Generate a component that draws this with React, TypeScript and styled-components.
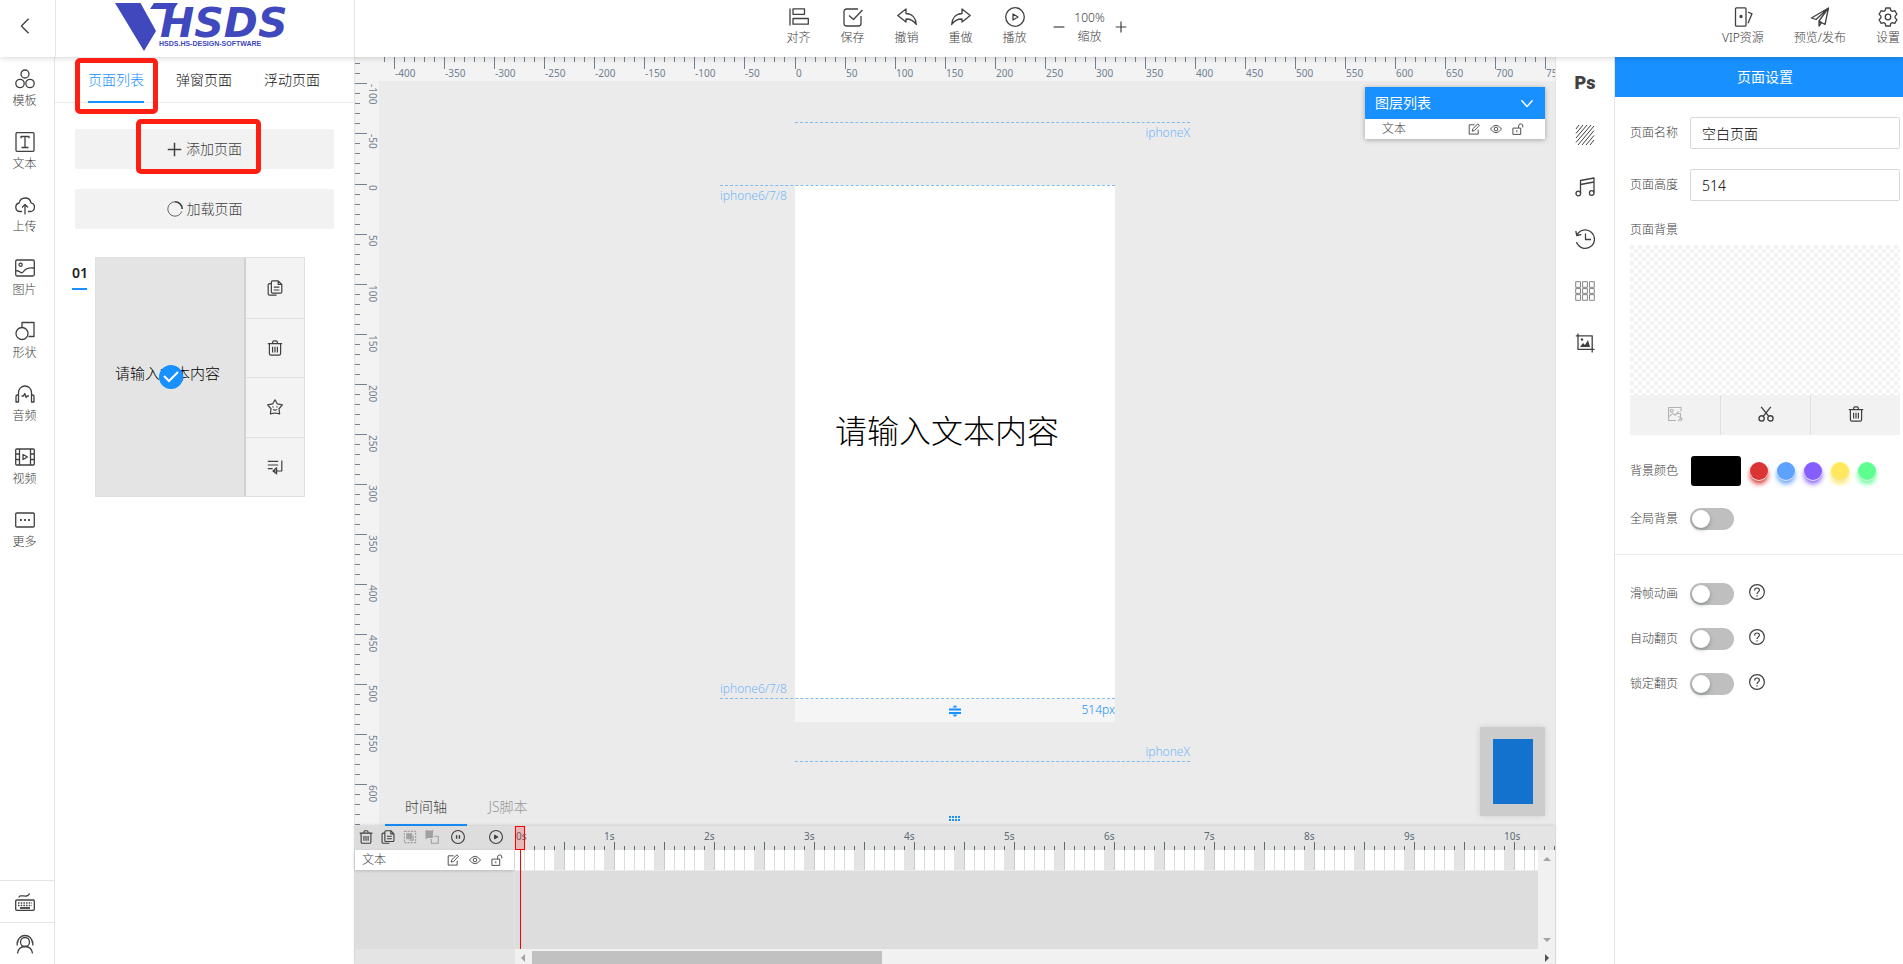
import React, { useLayoutEffect, useRef, useState } from "react";
import styled, { createGlobalStyle } from "styled-components";

const BLUE = "#1890ff";
const INK = "#404040";

const GlobalStyle = createGlobalStyle`
  *, *::before, *::after { box-sizing: border-box; }
  html, body, #root { height: 100%; }
  body {
    margin: 0;
    overflow: hidden;
    font-family: "Noto Sans", "Noto Sans CJK SC", sans-serif;
    font-size: 12px;
    font-weight: 300;
    line-height: 16px;
    color: ${INK};
    background: #fff;
  }
  button, input {
    font: inherit;
    color: inherit;
    margin: 0;
    padding: 0;
    border: 0;
    background: none;
  }
  button { cursor: pointer; }
  svg { display: block; }
  a { color: inherit; text-decoration: none; }
`;

/* ---------- icons ---------- */

type IconProps = { size?: number; weight?: number; children: React.ReactNode };

const Icon = ({ size = 20, weight = 1.3, children }: IconProps) => (
  <svg
    width={size}
    height={size}
    viewBox="0 0 20 20"
    fill="none"
    stroke="currentColor"
    strokeWidth={weight}
    strokeLinejoin="round"
    aria-hidden="true"
  >
    {children}
  </svg>
);

const icons = {
  template: (
    <>
      <circle cx="10" cy="5" r="4" />
      <circle cx="5" cy="14.5" r="4.2" />
      <circle cx="15" cy="14.5" r="4.2" />
    </>
  ),
  text: (
    <>
      <rect x="1" y="0.7" width="18" height="18.6" rx="1" />
      <path d="M6 6.2V4.5h8v1.7M10 4.5v11M6.5 15.5h7" />
    </>
  ),
  upload: (
    <path d="M7 16.500H5a4.300 4.300 0 0 1-.8-8.500A6 6 0 0 1 16 7.800a4.400 4.400 0 0 1-.8 8.700H13M10 19.500V9.500M7 12.500l3-3 3 3" />
  ),
  picture: (
    <>
      <rect x="0.7" y="2" width="18.6" height="16" rx="1.5" />
      <circle cx="5.6" cy="6.7" r="1.6" />
      <path d="M1 13c3-1.500 4 3 6.500 1.500S9.500 9 19 10" />
    </>
  ),
  shape: (
    <>
      <path d="M7 6V1.500h12v14h-5.500" />
      <circle cx="7" cy="12.500" r="6" />
    </>
  ),
  audio: (
    <>
      <path d="M3.500 11V8.500a6.500 6.500 0 0 1 13 0V11M3.500 11h-1a1.500 1.500 0 0 0-1.500 1.500V18h2.500zM16.500 11h1a1.500 1.500 0 0 1 1.500 1.500V18h-2.500z" />
      <path d="M6.500 12h2l1.200-2.500 1.500 4 .9-1.500h1.800" />
    </>
  ),
  video: (
    <>
      <rect x="0.7" y="2" width="18.6" height="16" rx="1" />
      <path d="M4.500 2v16M15.500 2v16M1 7h3.500M1 12.500h3.500M15.500 7H19M15.500 12.500H19M8 7.500v5l4.500-2.500z" />
    </>
  ),
  more: (
    <>
      <rect x="0.7" y="3" width="18.6" height="14" rx="1" />
      <path d="M5 10h1.800M9.100 10h1.800M13.200 10H15" strokeWidth="1.800" />
    </>
  ),
  keyboard: (
    <>
      <rect x="0.7" y="8" width="18.6" height="10.300" rx="1" />
      <path d="M3 11h14M3 13.500h14" strokeDasharray="1.500 1.200" />
      <path d="M5 16h10" strokeWidth="1.800" />
      <path d="M4 5.500c0-3 5-1 7.500-1.500S14 2.500 14.500 1.500" />
    </>
  ),
  support: (
    <>
      <circle cx="10" cy="8" r="4.500" />
      <path d="M2.500 9a7.500 7.500 0 0 1 15 0M2.200 7.500v4M17.800 7.500v4M2.500 19.500c.5-4 3-7 7.500-7s7 3 7.500 7" />
    </>
  ),
  align: (
    <>
      <path d="M1 1.500v17" />
      <path d="M4 1.800h11.500v5.500H4zM4 11.500h15.300v5.700H4z" />
    </>
  ),
  save: (
    <>
      <path d="M15 2H3.500A2.500 2.500 0 0 0 1 4.500v12A2.500 2.500 0 0 0 3.500 19h12a2.500 2.500 0 0 0 2.500-2.500V9" />
      <path d="M6 8.500l4.500 4L19.500 3" />
    </>
  ),
  undo: <path d="M9 2v4.500c6 .3 10 4.500 10.300 11-3-4.500-5.800-5.500-10.300-5.500v3L.8 8.500z" />,
  redo: <path d="M11 2v4.500C5 6.800 1 11 .7 17.500 3.700 13 6.500 12 11 12v3l8.200-6.500z" />,
  play: (
    <>
      <circle cx="10" cy="10" r="9.300" />
      <path d="M8 7v6l5-3z" />
    </>
  ),
  vip: (
    <>
      <rect x="2.500" y="0.800" width="10.500" height="18.400" rx="1" />
      <path d="M15 5l4 1.800-4 9.500" />
      <circle cx="8" cy="9.500" r="1" fill="currentColor" />
    </>
  ),
  publish: <path d="M18.500 1L1.500 11l4.500 1.500 12-11-9 12.500 6 3.500zM9 13.500V19l2.500-3.500" />,
  settings: (
    <>
      <path d="M7.800 1h4.400l.6 2.500 1.500.9 2.500-.8 2.100 3.700-1.800 1.800v1.800l1.800 1.800-2.100 3.700-2.500-.8-1.500.9-.6 2.500H7.800l-.6-2.500-1.500-.9-2.500.8-2.100-3.700 1.800-1.800V9.100L1.100 7.300l2.100-3.700 2.500.8 1.500-.9z" />
      <circle cx="10" cy="10" r="2.800" />
    </>
  ),
  copy: (
    <>
      <path d="M5.500 4.500H3A1.500 1.500 0 0 0 1.500 6v11.500A1.500 1.500 0 0 0 3 19h9" />
      <path d="M7 1h7l4.500 4.500V15A1.500 1.500 0 0 1 17 16.500H7A1.500 1.500 0 0 1 5.500 15V2.500A1.500 1.500 0 0 1 7 1zM14 1v4.500h4.500M8.500 9h7M8.500 12.500h7" />
    </>
  ),
  trash: (
    <path d="M1 4.500h18M7 4.500V3q0-2 2-2h2q2 0 2 2v1.500M3 4.500V17q0 2 2 2h10q2 0 2-2V4.500M7 8.500v7M10 8.500v7M13 8.500v7" />
  ),
  star: (
    <>
      <path d="M10 1l3 5.200 6.200 1.200-4.200 4.800.8 6.500L10 17.500l-5.800 1.200L5 12.200.8 7.400 7 6.200z" />
      <path d="M7.500 9v1.500M12.500 9v1.500M7.500 13q2.500 2 5 0" />
    </>
  ),
  insert: (
    <path d="M1 3h13M1 7.500h13M1 12h6M18.500 2v13H9M12 11l-4.500 4L12 18.500z" />
  ),
  hatch: (
    <path
      d="M1 4L4 0M1 8.500L8 0M1 13L12 0M1 17.500L16 0M3 20L19 1M7 20L19 5.500M11 20L19 10.500M15 20L19 15"
      strokeWidth="1"
    />
  ),
  music: (
    <>
      <path d="M5.500 16V3.500L19 1v14.500M5.500 7.500L19 5" />
      <circle cx="3.300" cy="16.500" r="2.300" />
      <circle cx="16.700" cy="16" r="2.300" />
    </>
  ),
  history: (
    <path d="M1.500 13A9.200 9.200 0 1 0 2 6M.8 2L1.800 6.500l4.500-.8M10.500 4.500v6H16" />
  ),
  grid: (
    <path
      d="M.7.7h4.800v5.600H.7zM7.600.7h4.800v5.600H7.600zM14.500.7h4.800v5.600h-4.800zM.7 7.600h4.800v4.800H.7zM7.600 7.600h4.800v4.800H7.600zM14.500 7.600h4.800v4.800h-4.800zM.7 13.700h4.800v5.600H.7zM7.600 13.700h4.800v5.600H7.600zM14.500 13.700h4.800v5.600h-4.800z"
      strokeWidth=".9"
      stroke="#777"
    />
  ),
  crop: (
    <>
      <path d="M3 .5v15.800h16.500M.8 2.800h16.400v16.700" />
      <path d="M5 14l3-4 2 2 3-5 2 7z" fill="currentColor" stroke="none" />
      <circle cx="7" cy="6.500" r="1.200" fill="currentColor" stroke="none" />
    </>
  ),
  swap: (
    <>
      <path d="M17.500 7V2H2v16h9" />
      <circle cx="6" cy="6" r="1.700" />
      <path d="M2.500 13l5-3.500 3 2 4-5M11 9.500h6v6l-3 3.500M14 13l5 3-2 3" />
    </>
  ),
  scissors: (
    <>
      <circle cx="4.500" cy="15.500" r="3.300" />
      <circle cx="15.500" cy="15.500" r="3.300" />
      <path d="M6.500 13L16 1M13.500 13L4 1" />
    </>
  ),
  help: (
    <>
      <circle cx="10" cy="10" r="9.200" />
      <path d="M7 8q0-3 3-3t3 2.700c0 2-3 2.300-3 4.800M10 14v1.500" />
    </>
  ),
  edit: (
    <>
      <path d="M11 3H2v15.500h15V11" />
      <path d="M7 13.500l1-4L16.500 1.500l2.500 2.300L11 12.500z" />
    </>
  ),
  eye: (
    <>
      <path d="M.8 10Q10-2.500 19.200 10 10 22.500.8 10z" />
      <circle cx="10" cy="10" r="3" />
    </>
  ),
  unlock: (
    <path d="M1.500 8.500h13V19h-13zM8 12v3.500M11 8.500V5a3.500 3.500 0 0 1 7 0v2.500" />
  ),
  group: (
    <>
      <path d="M2 2h16v16H2z" strokeDasharray="3 1.500" />
      <path d="M5.500 5.500h7v7h-7z" fill="currentColor" />
      <path d="M9 14.500h5.500V8" />
    </>
  ),
  ungroup: (
    <>
      <path d="M1.500 1.500h9v9h-9z" fill="currentColor" />
      <path d="M13 9h6v10H9v-6M1 1h2M10 1h2M1 12h2" />
    </>
  ),
  pause: (
    <>
      <circle cx="10" cy="10" r="9.200" />
      <path d="M8 7.500v5M12 7.500v5" strokeWidth="2" />
    </>
  ),
  playSolid: (
    <>
      <circle cx="10" cy="10" r="9.200" />
      <path d="M8 7.500v5l4.500-2.500z" fill="currentColor" />
    </>
  ),
  loading: (
    <>
      <path d="M10 1a9 9 0 1 0 8.500 12" strokeWidth="1" />
      <path d="M10 1a9 9 0 0 1 9 9" strokeWidth="2" />
    </>
  ),
  minus: <path d="M1 10h18" />,
  plus: <path d="M1 10h18M10 1v18" />,
  back: <path d="M14 2L6 10l8 8" />,
  down: <path d="M2 6l8 9 8-9" />,
};

type IconName = keyof typeof icons;

/* ---------- frame ---------- */

const Shell = styled.div`
  display: flex;
  flex-direction: column;
  height: 100vh;
  position: relative;
`;

const Header = styled.header`
  display: grid;
  grid-template-columns: 1fr auto 1fr;
  flex: none;
  height: 57px;
  background: #fff;
  box-shadow: 0 1px 6px rgba(0, 0, 0, 0.16);
  position: relative;
  z-index: 2;
`;

const Brand = styled.div`
  display: flex;
  width: 355px;
  border-right: 1px solid #e4e4e4;
`;

const BackLink = styled.a`
  display: flex;
  align-items: center;
  justify-content: center;
  width: 56px;
  padding: 0 6px 5px 0;
  border-right: 1px solid #e4e4e4;
`;

const LogoLink = styled.a`
  flex: 1;
  display: flex;
  justify-content: center;
`;

const Tools = styled.nav`
  display: flex;
`;

const ToolButton = styled.button<{ $width?: number }>`
  display: flex;
  flex-direction: column;
  align-items: center;
  gap: 3px;
  width: ${(p) => (p.$width ? `${p.$width}px` : "auto")};
  height: 57px;
  padding-top: 7px;
  white-space: nowrap;
`;

const Zoom = styled.div`
  display: flex;
  gap: 11px;
  align-items: center;
  width: 90px;
  height: 54px;
  padding-left: 11px;
`;

const ZoomValue = styled.div`
  display: flex;
  flex-direction: column;
  align-items: center;
  gap: 3px;
  width: 28px;
`;

const AccountTools = styled(Tools)`
  justify-content: flex-end;
  gap: 30px;
  padding-right: 3px;
`;

const Body = styled.div`
  flex: 1;
  min-height: 0;
  display: grid;
  grid-template-columns: 55px 300px minmax(0, 1fr) 59px 288px;
`;

/* ---------- left side ---------- */

const Sidebar = styled.nav`
  display: flex;
  flex-direction: column;
  border-right: 1px solid #e4e4e4;
`;

const SideItem = styled.button`
  display: flex;
  flex-direction: column;
  align-items: center;
  gap: 4px;
  width: 49px;
  height: 63px;
  padding-top: 12px;
`;

const SideFoot = styled.div`
  margin-top: auto;
`;

const SideFootButton = styled.button`
  display: flex;
  align-items: center;
  justify-content: center;
  width: 100%;
  height: 42px;
  padding-right: 5px;
  border-top: 1px solid #e4e4e4;
`;

const Panel = styled.aside`
  border-right: 1px solid #e4e4e4;
`;

const PanelTabs = styled.div`
  display: flex;
  height: 46px;
  padding-left: 17px;
  border-bottom: 1px solid #eaeaea;
`;

const PanelTab = styled.button<{ $active?: boolean }>`
  width: 88px;
  height: 46px;
  padding: 0 16px;
  font-size: 14px;
  color: ${(p) => (p.$active ? BLUE : "#111")};
  white-space: nowrap;

  span {
    display: block;
    height: 46px;
    line-height: 45px;
    border-bottom: 2px solid ${(p) => (p.$active ? BLUE : "transparent")};
  }
`;

const PanelActions = styled.div`
  display: grid;
  gap: 20px;
  padding: 26px 20px 28px;
`;

const PanelButton = styled.button`
  display: flex;
  align-items: center;
  justify-content: center;
  gap: 4px;
  height: 40px;
  border-radius: 2px;
  background: #f2f2f2;
  font-size: 14px;
`;

const PageItem = styled.div`
  display: grid;
  grid-template-columns: 23px 210px;
  margin-left: 17px;
`;

const PageIndex = styled.div`
  width: 15px;
  height: 33px;
  padding-top: 8px;
  border-bottom: 2px solid ${BLUE};
  font-size: 14px;
  font-weight: 600;
  color: #222;
`;

const PageCard = styled.div`
  display: grid;
  grid-template-columns: 1fr 60px;
  height: 240px;
  border: 1px solid #e0e0e0;
  background: #e4e4e4;
`;

const Thumb = styled.button`
  position: relative;
  text-align: center;
  font-size: 15px;
  line-height: 20px;
  color: #000;
  padding: 0 5px 8px 0;
`;

const Tick = styled.span`
  position: absolute;
  left: 50%;
  top: 50%;
  margin: -12px 0 0 -11px;
  width: 24px;
  height: 24px;
  display: grid;
  place-items: center;
  border-radius: 50%;
  background: ${BLUE};
  color: #fff;
`;

const CardActions = styled.div`
  display: grid;
  grid-template-rows: repeat(4, 1fr);
  border-left: 2px solid #d2d2d2;
`;

const CardAction = styled.button`
  display: grid;
  place-items: center;
  background: #f3f3f3;

  & + & {
    border-top: 1px solid #e0e0e0;
  }
`;

const Marker = styled.div<{ $x: number; $y: number; $w: number; $h: number }>`
  position: absolute;
  z-index: 3;
  left: ${(p) => p.$x}px;
  top: ${(p) => p.$y}px;
  width: ${(p) => p.$w}px;
  height: ${(p) => p.$h}px;
  border: 5px solid #ff1f12;
  border-radius: 5px;
  pointer-events: none;
`;

/* ---------- editor ---------- */

const Editor = styled.main`
  display: flex;
  flex-direction: column;
  min-width: 0;
  border-right: 1px solid #e4e4e4;
`;

const Workspace = styled.section`
  position: relative;
  flex: 1;
  min-height: 0;
  overflow: hidden;
  background: #ebebeb;
`;

const RulerDrawing = styled.svg`
  width: 100%;
  height: 100%;
  font-size: 10px;
  font-weight: 400;
`;

const TopRuler = styled.div`
  position: absolute;
  inset: 0 0 auto 0;
  height: 24px;
  overflow: hidden;
  background: #f3f3f3;
`;

const SideRuler = styled.div`
  position: absolute;
  inset: 0 auto 0 0;
  width: 24px;
  overflow: hidden;
  background: #f3f3f3;
`;

const Artboard = styled.div`
  position: absolute;
  left: 50%;
  top: 128px;
  width: 320px;
  height: 514px;
  margin-left: -160px;
  background: #fff;
`;

const ArtText = styled.div`
  position: absolute;
  left: 40px;
  top: 222px;
  font-size: 32px;
  line-height: 48px;
  color: #000;
  white-space: nowrap;
`;

const ArtFoot = styled.div`
  position: absolute;
  inset: 100% 0 auto 0;
  height: 23px;
  display: grid;
  grid-template-columns: 1fr auto 1fr;
  align-items: center;
  background: #f5f5f5;
  color: ${BLUE};
  line-height: 20px;

  output {
    padding-bottom: 2px;
    text-align: right;
  }
`;

const Guide = styled.div<{ $y: number; $side: "left" | "right"; $above?: boolean }>`
  position: absolute;
  top: ${(p) => p.$y}px;
  ${(p) => (p.$side === "left" ? "left: -75px; right: 0;" : "left: 0; right: -75px;")}
  border-top: 1px dashed #7fbcf5;
  color: #74b7f7;
  text-align: ${(p) => p.$side};

  span {
    position: absolute;
    ${(p) => p.$side}: 0;
    ${(p) => (p.$above ? "bottom: 2px;" : "top: 2px;")}
  }
`;

const LayerPanel = styled.section`
  position: absolute;
  right: 10px;
  top: 30px;
  width: 180px;
  background: #fff;
  box-shadow: 0 1px 5px rgba(0, 0, 0, 0.3);
`;

const LayerHead = styled.button`
  display: flex;
  align-items: center;
  justify-content: space-between;
  width: 100%;
  height: 32px;
  padding: 0 11px 0 10px;
  background: ${BLUE};
  color: #fff;
  font-size: 14px;
  font-weight: 400;
`;

const LayerRow = styled.div`
  display: flex;
  align-items: center;
  gap: 10px;
  height: 20px;
  padding: 0 21px 0 17px;

  span {
    margin-right: auto;
  }
`;

const Minimap = styled.div`
  position: absolute;
  right: 10px;
  bottom: 10px;
  width: 65px;
  height: 89px;
  padding: 12px 12px 12px 13px;
  background: #ccc;
  box-shadow: 0 0 6px rgba(0, 0, 0, 0.12);

  div {
    height: 100%;
    background: #1472cf;
  }
`;

const TimelineTabs = styled.div`
  position: absolute;
  left: 30px;
  bottom: 0;
  display: flex;
`;

const TimelineTab = styled.button<{ $active?: boolean }>`
  width: 82px;
  height: 36px;
  border-bottom: 2px solid ${(p) => (p.$active ? BLUE : "transparent")};
  font-size: 14px;
  color: ${(p) => (p.$active ? INK : "#999")};
`;

const Grip = styled.div`
  position: absolute;
  left: 50%;
  bottom: 5px;
  margin-left: -6px;
`;

const Timeline = styled.section`
  position: relative;
  flex: none;
  height: 138px;
  display: grid;
  grid-template-columns: 160px minmax(0, 1fr);
  grid-template-rows: 24px 99px 15px;
  background: #ddd;
  box-shadow: 0 -1px 3px rgba(0, 0, 0, 0.12);
`;

const TrackTools = styled.div`
  display: flex;
  align-items: center;
  gap: 8px;
  padding: 0 12px 2px 4px;

  button:last-child {
    margin-left: auto;
  }

  button:nth-child(5) {
    margin-left: 4px;
  }
`;

const MutedButton = styled.button`
  color: #a0a0a0;
`;

const TimeRuler = styled.div`
  overflow: hidden;
  background: #e4e4e4;
`;

const TrackNames = styled.div`
  border-right: 1px solid #e4e4e4;
`;

const TrackName = styled.div`
  display: flex;
  align-items: center;
  gap: 10px;
  height: 20px;
  padding: 0 11px 0 7px;
  background: #fff;
  box-shadow: 0 1px 3px rgba(0, 0, 0, 0.16);

  span {
    margin-right: auto;
  }
`;

const Tracks = styled.div`
  display: grid;
  grid-template-columns: 1fr 17px;
`;

const Frames = styled.div`
  height: 21px;
  border-bottom: 1px solid #ececec;
  background: repeating-linear-gradient(
    90deg,
    #fff 0 9px, #d9dede 9px 10px,
    #fff 10px 19px, #d9dede 19px 20px,
    #fff 20px 29px, #d9dede 29px 30px,
    #fff 30px 39px, #e4e4e4 39px 49px,
    #c4cccf 49px 50px
  );
`;

const VBar = styled.div`
  display: flex;
  flex-direction: column;
  justify-content: space-between;
  align-items: center;
  padding: 7px 0;
  background: #f1f1f1;
`;

const HBar = styled.div`
  display: flex;
  align-items: center;
  padding: 2px 6px 0;
  background: #f1f1f1;
`;

const BarThumb = styled.div`
  width: 350px;
  height: 13px;
  margin: 0 auto 0 7px;
  background: #c1c1c1;
`;

const pointing = { up: "bottom", down: "top", left: "right", right: "left" };
const opposite = { up: "top", down: "bottom", left: "left", right: "right" };

const Arrow = styled.span<{ $dir: "up" | "down" | "left" | "right"; $dark?: boolean }>`
  width: 0;
  height: 0;
  border: 4px solid transparent;
  border-${(p) => pointing[p.$dir]}-color: ${(p) => (p.$dark ? "#505050" : "#a3a3a3")};
  border-${(p) => opposite[p.$dir]}-width: 0;
`;

const BarCorner = styled.div`
  background: #e4e4e4;
`;

const Playhead = styled.div`
  position: absolute;
  left: 160px;
  top: 0;
  width: 10px;
  height: 24px;
  border: 1px solid #f00;
  background: rgba(255, 0, 0, 0.2);

  &::after {
    content: "";
    position: absolute;
    left: 4px;
    top: 23px;
    height: 99px;
    border-left: 1px solid #f00;
  }
`;

/* ---------- right side ---------- */

const Rail = styled.nav`
  display: flex;
  flex-direction: column;
  align-items: center;
  border-right: 1px solid #e4e4e4;
`;

const RailButton = styled.button`
  display: grid;
  place-items: center;
  width: 58px;
  height: 52px;
`;

const PsMark = styled.b`
  font-family: Roboto, sans-serif;
  font-size: 18px;
  line-height: 20px;
  font-weight: 900;
`;

const Settings = styled.aside`
  min-width: 0;
`;

const SettingsTitle = styled.h2`
  margin: 0;
  height: 40px;
  padding-left: 12px;
  line-height: 40px;
  font-size: 14px;
  font-weight: 400;
  text-align: center;
  color: #fff;
  background: ${BLUE};
`;

const SettingsBlock = styled.div`
  padding: 20px 3px 0 15px;

  & + & {
    border-top: 1px solid #eaeaea;
    padding-top: 28px;
  }
`;

const Field = styled.div<{ $gap?: number }>`
  display: grid;
  grid-template-columns: 60px 1fr;
  align-items: center;
  margin-bottom: ${(p) => p.$gap ?? 20}px;
`;

const TextInput = styled.input`
  width: 100%;
  height: 32px;
  padding: 0 11px;
  border: 1px solid #d9d9d9;
  border-radius: 2px;
  font-size: 14px;
  color: #000;
`;

const Caption = styled.div`
  height: 24px;
  line-height: 18px;
`;

const Checker = styled.div`
  height: 150px;
  background: repeating-conic-gradient(#fff 0 25%, #f2f2f2 0 50%) 0 0 / 8px 8px;
`;

const CheckerTools = styled.div`
  display: grid;
  grid-template-columns: repeat(3, 1fr);
  height: 40px;
  margin-bottom: 21px;
  background: #f2f2f2;
`;

const CheckerTool = styled.button<{ $off?: boolean }>`
  display: grid;
  place-items: center;
  padding-bottom: 2px;
  color: ${(p) => (p.$off ? "#b0b0b0" : INK)};

  & + & {
    border-left: 1px solid #e0e0e0;
  }
`;

const Colors = styled.div`
  display: flex;
  align-items: center;
  gap: 9px;
`;

const ColorInput = styled.input`
  width: 51px;
  height: 30px;
  padding-left: 1px;
  appearance: none;

  &::-webkit-color-swatch-wrapper {
    padding: 0;
  }

  &::-webkit-color-swatch {
    border: 0;
    border-radius: 3px;
  }
`;

const Swatch = styled.button<{ $color: string }>`
  width: 18px;
  height: 18px;
  border-radius: 50%;
  background: ${(p) => p.$color};
  box-shadow: 0 1px 0 #e8e8e8, 0 4px 5px ${(p) => p.$color};
`;

const SwitchCell = styled.div`
  display: flex;
  align-items: center;
  gap: 15px;
  height: 22px;
`;

const HelpButton = styled.button`
  padding-bottom: 4px;
`;

const Switch = styled.input`
  appearance: none;
  width: 44px;
  height: 22px;
  border-radius: 11px;
  background: #bfbfbf;

  &::before {
    content: "";
    display: block;
    width: 18px;
    height: 18px;
    margin: 2px;
    border-radius: 50%;
    background: #fff;
    box-shadow: 0 2px 4px rgba(0, 35, 11, 0.3);
  }
`;

/* ---------- pieces ---------- */

const Logo = () => (
  <svg width="190" height="57" viewBox="2 0 190 57" role="img" aria-label="VHSDS">
    <g fill="#3f48bd">
      <path d="M7 3h25.500L48 31 36 51z" />
      <path d="M46 3h24l-4 6H42z" />
      <text
        x="52"
        y="37"
        fontFamily="DejaVu Sans"
        fontWeight="700"
        fontStyle="italic"
        fontSize="41"
      >
        HSDS
      </text>
      <text x="51" y="46" fontFamily="Liberation Sans" fontWeight="700" fontSize="7">
        HSDS.HS-DESIGN-SOFTWARE
      </text>
    </g>
  </svg>
);

const RULER_INK = "#6f8192";

const range = (from: number, to: number, step: number) =>
  Array.from({ length: Math.max(0, Math.floor((to - from) / step) + 1) }, (_, i) => from + i * step);

/* Marks below zero sit one pixel before their value, as the zero mark takes one itself. */
const markAt = (value: number) => (value < 0 ? value - 1 : value);

const useLength = (side: "clientWidth" | "clientHeight") => {
  const ref = useRef<HTMLDivElement>(null);
  const [length, setLength] = useState(0);
  useLayoutEffect(() => {
    const node = ref.current;
    if (!node) return;
    const measure = () => setLength(node[side]);
    measure();
    const observer = new ResizeObserver(measure);
    observer.observe(node);
    return () => observer.disconnect();
  }, [side]);
  return [ref, length] as const;
};

const HorizontalRuler = () => {
  const [ref, length] = useLength("clientWidth");
  const zero = Math.round(length / 2) - 160;
  const first = -Math.floor((zero - 6) / 10) * 10;
  return (
    <TopRuler ref={ref}>
      <RulerDrawing fill={RULER_INK}>
        {range(first, length - zero - 1, 10).map((v) => {
          const x = zero + markAt(v);
          const major = v % 50 === 0;
          return (
            <g key={v}>
              <rect x={x} y="0" width="1" height={major ? 12 : 5} />
              {major && (
                <text x={x + 1} y="20">
                  {v}
                </text>
              )}
            </g>
          );
        })}
      </RulerDrawing>
    </TopRuler>
  );
};

const VerticalRuler = () => {
  const [ref, length] = useLength("clientHeight");
  const zero = 127;
  return (
    <SideRuler ref={ref}>
      <RulerDrawing fill={RULER_INK}>
        {range(-120, length - zero - 1, 10).map((v) => {
          const y = zero + markAt(v);
          const major = v % 50 === 0;
          return (
            <g key={v}>
              <rect x="0" y={y} width={major ? 12 : 5} height="1" />
              {major && (
                <text transform={`translate(14 ${y + 1}) rotate(90)`}>{v}</text>
              )}
            </g>
          );
        })}
      </RulerDrawing>
    </SideRuler>
  );
};

const SecondsRuler = () => {
  const [ref, length] = useLength("clientWidth");
  return (
    <TimeRuler ref={ref}>
      <RulerDrawing fill="#5b6b75">
        <text x="1" y="14">
          0s
        </text>
        {range(1, length / 10, 1).map((v) => {
          const x = v * 10 - 1;
          const major = v % 5 === 0;
          return (
            <g key={v}>
              <rect x={x} y={major ? 16 : 20} width="1" height={major ? 8 : 4} />
              {v % 10 === 0 && (
                <text x={x - 10} y="14">
                  {v / 10}s
                </text>
              )}
            </g>
          );
        })}
      </RulerDrawing>
    </TimeRuler>
  );
};

const sideItems: [IconName, string][] = [
  ["template", "模板"],
  ["text", "文本"],
  ["upload", "上传"],
  ["picture", "图片"],
  ["shape", "形状"],
  ["audio", "音频"],
  ["video", "视频"],
  ["more", "更多"],
];

const toolItems: [IconName, string][] = [
  ["align", "对齐"],
  ["save", "保存"],
  ["undo", "撤销"],
  ["redo", "重做"],
  ["play", "播放"],
];

const accountItems: [IconName, string][] = [
  ["vip", "VIP资源"],
  ["publish", "预览/发布"],
  ["settings", "设置"],
];

const railItems: [IconName, string][] = [
  ["hatch", "背景"],
  ["music", "音乐"],
  ["history", "历史"],
  ["grid", "网格"],
  ["crop", "裁剪"],
];

const cardItems: [IconName, string][] = [
  ["copy", "复制"],
  ["trash", "删除"],
  ["star", "收藏"],
  ["insert", "插入"],
];

const swatches = ["#db3434", "#5ea2ff", "#865eff", "#ffe75e", "#5eff91"];

const LayerIcons = () => (
  <>
    <button aria-label="编辑">
      <Icon size={12} weight={1.5}>{icons.edit}</Icon>
    </button>
    <button aria-label="显示">
      <Icon size={12} weight={1.5}>{icons.eye}</Icon>
    </button>
    <button aria-label="锁定">
      <Icon size={12} weight={1.5}>{icons.unlock}</Icon>
    </button>
  </>
);

type SwitchFieldProps = { id: string; label: string; gap: number; help?: boolean };

const SwitchField = ({ id, label, gap, help }: SwitchFieldProps) => (
  <Field $gap={gap}>
    <label htmlFor={id}>{label}</label>
    <SwitchCell>
      <Switch id={id} type="checkbox" />
      {help && (
        <HelpButton aria-label={`${label}说明`}>
          <Icon size={16} weight={1.5}>{icons.help}</Icon>
        </HelpButton>
      )}
    </SwitchCell>
  </Field>
);

export default function App() {
  return (
    <Shell>
      <GlobalStyle />
      <Header>
        <Brand>
          <BackLink href="#back" aria-label="返回">
            <Icon size={18} weight={1.5}>{icons.back}</Icon>
          </BackLink>
          <LogoLink href="#home">
            <Logo />
          </LogoLink>
        </Brand>
        <Tools>
          {toolItems.map(([icon, label]) => (
            <ToolButton key={label} $width={54}>
              <Icon>{icons[icon]}</Icon>
              {label}
            </ToolButton>
          ))}
          <Zoom>
            <button aria-label="缩小">
              <Icon size={12} weight={2}>{icons.minus}</Icon>
            </button>
            <ZoomValue>
              <span>100%</span>
              <span>缩放</span>
            </ZoomValue>
            <button aria-label="放大">
              <Icon size={12} weight={2}>{icons.plus}</Icon>
            </button>
          </Zoom>
        </Tools>
        <AccountTools>
          {accountItems.map(([icon, label]) => (
            <ToolButton key={label}>
              <Icon>{icons[icon]}</Icon>
              {label}
            </ToolButton>
          ))}
        </AccountTools>
      </Header>

      <Body>
        <Sidebar>
          {sideItems.map(([icon, label]) => (
            <SideItem key={label}>
              <Icon>{icons[icon]}</Icon>
              {label}
            </SideItem>
          ))}
          <SideFoot>
            <SideFootButton aria-label="快捷键">
              <Icon>{icons.keyboard}</Icon>
            </SideFootButton>
            <SideFootButton aria-label="客服">
              <Icon>{icons.support}</Icon>
            </SideFootButton>
          </SideFoot>
        </Sidebar>

        <Panel>
          <PanelTabs>
            <PanelTab $active>
              <span>页面列表</span>
            </PanelTab>
            <PanelTab>
              <span>弹窗页面</span>
            </PanelTab>
            <PanelTab>
              <span>浮动页面</span>
            </PanelTab>
          </PanelTabs>
          <PanelActions>
            <PanelButton>
              <Icon size={15} weight={2}>{icons.plus}</Icon>
              添加页面
            </PanelButton>
            <PanelButton>
              <Icon size={16}>{icons.loading}</Icon>
              加载页面
            </PanelButton>
          </PanelActions>
          <PageItem>
            <PageIndex>01</PageIndex>
            <PageCard>
              <Thumb>
                请输入文本内容
                <Tick>
                  <svg width="16" height="12" fill="none" stroke="#fff" strokeWidth="2" aria-hidden="true">
                    <path d="M1 5l5 5 9-9" />
                  </svg>
                </Tick>
              </Thumb>
              <CardActions>
                {cardItems.map(([icon, label]) => (
                  <CardAction key={label} aria-label={label}>
                    <Icon size={16} weight={1.5}>{icons[icon]}</Icon>
                  </CardAction>
                ))}
              </CardActions>
            </PageCard>
          </PageItem>
        </Panel>

        <Editor>
          <Workspace>
            <HorizontalRuler />
            <VerticalRuler />
            <Artboard>
              <ArtText>请输入文本内容</ArtText>
              <ArtFoot>
                <span />
                <svg width="12" height="12" fill={BLUE} aria-hidden="true">
                  <path d="M0 3.500h12v2H0zM0 7h12v2H0zM6 0l2.500 2.500h-5zM6 12l2.500-2.500h-5z" />
                </svg>
                <output>514px</output>
              </ArtFoot>
              <Guide $y={-63} $side="right">
                <span>iphoneX</span>
              </Guide>
              <Guide $y={0} $side="left">
                <span>iphone6/7/8</span>
              </Guide>
              <Guide $y={513} $side="left" $above>
                <span>iphone6/7/8</span>
              </Guide>
              <Guide $y={576} $side="right" $above>
                <span>iphoneX</span>
              </Guide>
            </Artboard>
            <LayerPanel>
              <LayerHead>
                图层列表
                <Icon size={14} weight={2}>{icons.down}</Icon>
              </LayerHead>
              <LayerRow>
                <span>文本</span>
                <LayerIcons />
              </LayerRow>
            </LayerPanel>
            <TimelineTabs>
              <TimelineTab $active>时间轴</TimelineTab>
              <TimelineTab>JS脚本</TimelineTab>
            </TimelineTabs>
            <Grip>
              <svg width="12" height="5" stroke={BLUE} strokeWidth="2" strokeDasharray="2 1" aria-hidden="true">
                <path d="M0 1h12M0 4h12" />
              </svg>
            </Grip>
            <Minimap>
              <div />
            </Minimap>
          </Workspace>

          <Timeline>
            <TrackTools>
              <button aria-label="删除">
                <Icon size={14} weight={1.6}>{icons.trash}</Icon>
              </button>
              <button aria-label="复制">
                <Icon size={14} weight={1.6}>{icons.copy}</Icon>
              </button>
              <MutedButton aria-label="组合">
                <Icon size={14} weight={1.6}>{icons.group}</Icon>
              </MutedButton>
              <MutedButton aria-label="拆分">
                <Icon size={14} weight={1.6}>{icons.ungroup}</Icon>
              </MutedButton>
              <button aria-label="暂停">
                <Icon size={14} weight={1.6}>{icons.pause}</Icon>
              </button>
              <button aria-label="播放">
                <Icon size={14} weight={1.6}>{icons.playSolid}</Icon>
              </button>
            </TrackTools>
            <SecondsRuler />
            <TrackNames>
              <TrackName>
                <span>文本</span>
                <LayerIcons />
              </TrackName>
            </TrackNames>
            <Tracks>
              <Frames />
              <VBar>
                <Arrow $dir="up" />
                <Arrow $dir="down" />
              </VBar>
            </Tracks>
            <BarCorner />
            <HBar>
              <Arrow $dir="left" />
              <BarThumb />
              <Arrow $dir="right" $dark />
            </HBar>
            <Playhead />
          </Timeline>
        </Editor>

        <Rail>
          <RailButton aria-label="导入 Photoshop">
            <PsMark>Ps</PsMark>
          </RailButton>
          {railItems.map(([icon, label]) => (
            <RailButton key={label} aria-label={label}>
              <Icon>{icons[icon]}</Icon>
            </RailButton>
          ))}
        </Rail>

        <Settings>
          <SettingsTitle>页面设置</SettingsTitle>
          <SettingsBlock>
            <Field>
              <label htmlFor="page-name">页面名称</label>
              <TextInput id="page-name" defaultValue="空白页面" />
            </Field>
            <Field>
              <label htmlFor="page-height">页面高度</label>
              <TextInput id="page-height" defaultValue="514" />
            </Field>
            <Caption>页面背景</Caption>
            <Checker />
            <CheckerTools>
              <CheckerTool $off aria-label="更换">
                <Icon size={16}>{icons.swap}</Icon>
              </CheckerTool>
              <CheckerTool aria-label="裁剪">
                <Icon size={16} weight={1.7}>{icons.scissors}</Icon>
              </CheckerTool>
              <CheckerTool aria-label="删除">
                <Icon size={16} weight={1.5}>{icons.trash}</Icon>
              </CheckerTool>
            </CheckerTools>
            <Field $gap={22}>
              <label htmlFor="page-color">背景颜色</label>
              <Colors>
                <ColorInput id="page-color" type="color" defaultValue="#000000" />
                {swatches.map((color) => (
                  <Swatch key={color} $color={color} aria-label={color} />
                ))}
              </Colors>
            </Field>
            <SwitchField id="global-bg" label="全局背景" gap={24} />
          </SettingsBlock>
          <SettingsBlock>
            <SwitchField id="slide-anim" label="滑帧动画" gap={23} help />
            <SwitchField id="auto-flip" label="自动翻页" gap={23} help />
            <SwitchField id="lock-flip" label="锁定翻页" gap={23} help />
          </SettingsBlock>
        </Settings>
      </Body>

      <Marker $x={75} $y={58} $w={83} $h={56} />
      <Marker $x={136} $y={119} $w={125} $h={55} />
    </Shell>
  );
}
